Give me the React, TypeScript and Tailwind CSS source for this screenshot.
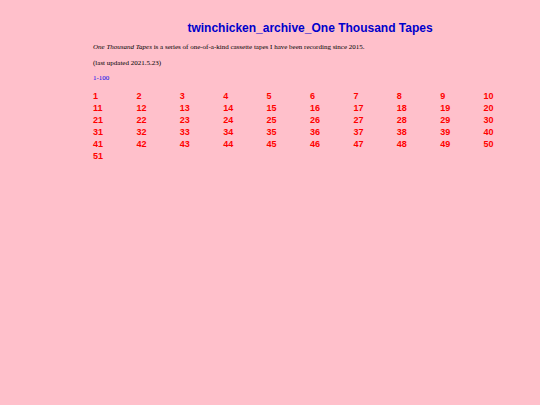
const tapes = Array.from({ length: 51 }, (_, i) => i + 1);

export default function App() {
  return (
    <div className="min-h-[405px] w-full bg-[#ffc0cb]">
      <div className="ml-[93px] w-[434px] pt-[21px]">
        <h1 className="text-center font-['Liberation_Sans',Arial,sans-serif] text-[12px] font-bold leading-[14px] text-[#0000cc]">
          twinchicken_archive_One Thousand Tapes
        </h1>

        <div className="mt-[8px] font-['Liberation_Serif','Times_New_Roman',serif] text-[7px] leading-[8px] text-black">
          <p>
            <i>One Thousand Tapes</i> is a series of one-of-a-kind cassette tapes I have been recording since 2015.
          </p>
          <p className="mt-[8px]">(last updated 2021.5.23)</p>
          <p className="mt-[7px]">
            <a href="#" className="text-[#0000ee]">
              1-100
            </a>
          </p>
        </div>

        {/* tape index, ten per row */}
        <div className="mt-[8px] grid grid-cols-10 font-['Liberation_Sans',Arial,sans-serif] text-[9px] font-bold leading-[12px] text-[#ff0000]">
          {tapes.map((n) => (
            <a key={n} href="#">
              {n}
            </a>
          ))}
        </div>
      </div>
    </div>
  );
}
